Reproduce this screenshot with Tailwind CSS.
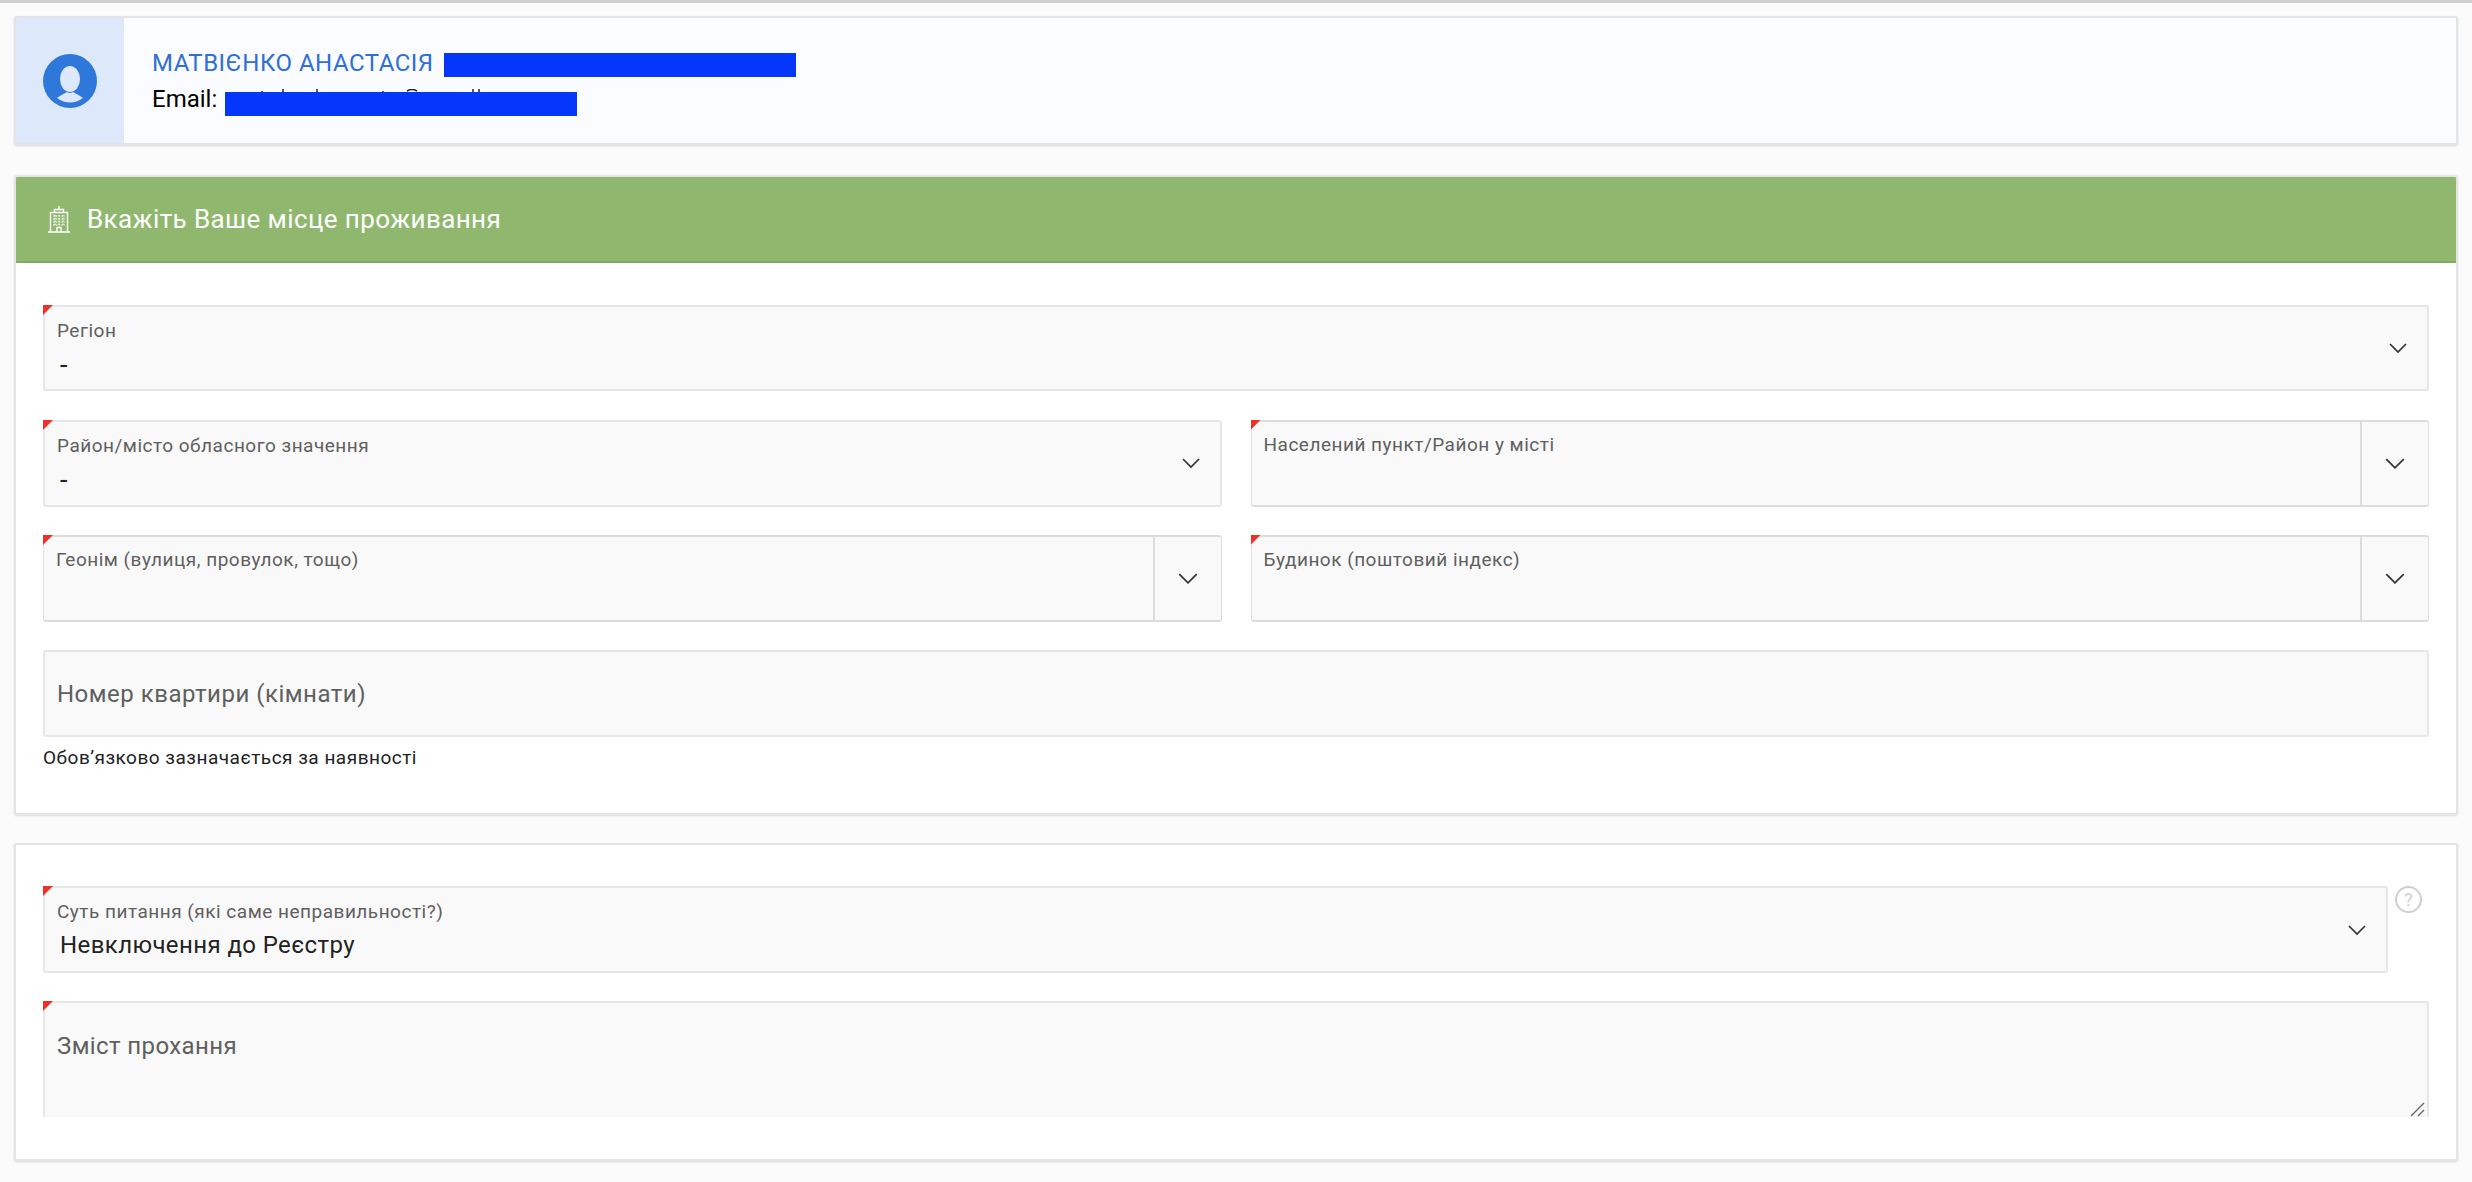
<!DOCTYPE html>
<html lang="uk">
<head>
  <meta charset="UTF-8">
  <title>Вкажіть Ваше місце проживання</title>
  <script src="https://cdn.jsdelivr.net/npm/@tailwindcss/browser@4"></script>
</head>
<body class="h-[1182px] overflow-hidden bg-[#fbfbfb] [font-family:Roboto,sans-serif]">
  <div class="h-[3px] bg-[#cfcfcf]"></div>

  <div class="px-[14px] pt-[13px]">
    <!-- user card -->
    <div class="flex h-[129px] overflow-hidden rounded-[3px] border-2 border-[#e2e4ea] bg-[#fbfcff] shadow-sm">
      <div class="flex w-[108px] items-center justify-center bg-[#dde8fa]">
        <svg width="54" height="54" viewBox="0 0 54 54">
          <circle cx="27" cy="27" r="27" fill="#2f78db"/>
          <ellipse cx="27" cy="25" rx="10" ry="13" fill="#dde8fa"/>
          <path d="M14 44 Q20 40 24 38 Q27 40 30 38 Q34 40 40 44 Q27 53 14 44Z" fill="#dde8fa"/>
        </svg>
      </div>
      <div class="pl-[28px] pt-[32px]">
        <div class="flex h-[36px] items-start text-[24px] leading-[26px] tracking-[0.5px] text-[#2f6fd6]">
          <span>МАТВІЄНКО АНАСТАСІЯ</span>
          <span class="ml-[10px] mt-[3px] h-[24px] w-[352px] bg-[#0437f9]"></span>
        </div>
        <div class="flex items-start text-[24px] leading-[26px] text-black">
          <span>Email:</span>
          <span class="relative ml-[8px] mt-[6px] h-[24px] w-[352px] bg-[#0437f9]">
            <!-- tops of the letters that stick out above the blue bar -->
            <svg class="absolute -top-[3px] left-0" width="352" height="3" viewBox="0 0 352 3" fill="none" stroke="#222" stroke-width="1.5">
              <path d="M37 2V3M58 0V3M92 0V3M158 2V3M182 2Q187 -1 192 2M248 0V3M254 0V3"/>
            </svg>
          </span>
        </div>
      </div>
    </div>

    <!-- address card -->
    <div class="mt-[30px] h-[640px] overflow-hidden rounded-[3px] border-2 border-[#e4e4e4] bg-white shadow-sm">
      <div class="flex h-[86px] items-center gap-[16px] border-b-2 border-[#84ab63] bg-[#8fb86e] pl-[31px] text-white">
        <svg width="24" height="27" viewBox="0 0 24 27" fill="none" stroke="#fff" stroke-width="1.4">
          <path d="M1 26H23M3.5 26V6.5H20.5V26M7.5 6.5V3.5H16.5V6.5M12 3.5V0"/>
          <path d="M10 26V21.5H14V26"/>
          <path d="M6 10H18M6 13H18M6 16H18M6 19H18M8 9V20M12 9V20M16 9V20" stroke-width="1.2" stroke-dasharray="1.6 1.2"/>
        </svg>
        <span class="text-[26px] tracking-[0.4px]">Вкажіть Ваше місце проживання</span>
      </div>

      <div class="grid grid-cols-2 gap-x-[29px] gap-y-[28px] pl-[27px] pr-[27px] pt-[42px]">
        <!-- region -->
        <div class="relative col-span-2 mb-[1px] h-[86px] rounded-[3px] border-2 border-[#e6e6e6] bg-[#f9f9f9] pl-[12px] pt-[13px]">
          <div class="absolute -left-[2px] -top-[2px] h-[10px] w-[10px] bg-[#ee3124] [clip-path:polygon(0_0,100%_0,0_100%)]"></div>
          <div class="text-[19px] leading-[22px] tracking-[0.5px] text-[#5f5f5f]">Регіон</div>
          <div class="mt-[9px] pl-[3px] text-[27px] leading-[28px] text-[#222]">-</div>
          <svg class="absolute right-[20px] top-[36px]" width="18" height="11" viewBox="0 0 18 11" fill="none" stroke="#333" stroke-width="1.7"><path d="M1 1L9 9L17 1"/></svg>
        </div>

        <!-- district -->
        <div class="relative h-[87px] rounded-[3px] border-2 border-[#e6e6e6] bg-[#f9f9f9] pl-[12px] pt-[13px]">
          <div class="absolute -left-[2px] -top-[2px] h-[10px] w-[10px] bg-[#ee3124] [clip-path:polygon(0_0,100%_0,0_100%)]"></div>
          <div class="text-[19px] leading-[22px] tracking-[0.5px] text-[#5f5f5f]">Район/місто обласного значення</div>
          <div class="mt-[9px] pl-[3px] text-[27px] leading-[28px] text-[#222]">-</div>
          <svg class="absolute right-[20px] top-[36px]" width="18" height="11" viewBox="0 0 18 11" fill="none" stroke="#333" stroke-width="1.7"><path d="M1 1L9 9L17 1"/></svg>
        </div>

        <!-- settlement -->
        <div class="relative flex h-[87px] rounded-[3px] border-x border-y-2 border-x-[#e0e0e0] border-y-[#dcdcdc] bg-[#f9f9f9]">
          <div class="absolute -left-[1px] -top-[2px] h-[10px] w-[10px] bg-[#ee3124] [clip-path:polygon(0_0,100%_0,0_100%)]"></div>
          <div class="flex-1 pl-[12px] pt-[12px] text-[19px] leading-[22px] tracking-[0.5px] text-[#5f5f5f]">Населений пункт/Район у місті</div>
          <div class="flex w-[68px] items-center justify-center border-l-2 border-[#dcdcdc]">
            <svg width="20" height="12" viewBox="0 0 18 11" fill="none" stroke="#333" stroke-width="1.6"><path d="M1 1L9 9L17 1"/></svg>
          </div>
        </div>

        <!-- street -->
        <div class="relative flex h-[87px] rounded-[3px] border-x border-y-2 border-x-[#e0e0e0] border-y-[#dcdcdc] bg-[#f9f9f9]">
          <div class="absolute -left-[1px] -top-[2px] h-[10px] w-[10px] bg-[#ee3124] [clip-path:polygon(0_0,100%_0,0_100%)]"></div>
          <div class="flex-1 pl-[12px] pt-[12px] text-[19px] leading-[22px] tracking-[0.5px] text-[#5f5f5f]">Геонім (вулиця, провулок, тощо)</div>
          <div class="flex w-[68px] items-center justify-center border-l-2 border-[#dcdcdc]">
            <svg width="20" height="12" viewBox="0 0 18 11" fill="none" stroke="#333" stroke-width="1.6"><path d="M1 1L9 9L17 1"/></svg>
          </div>
        </div>

        <!-- house -->
        <div class="relative flex h-[87px] rounded-[3px] border-x border-y-2 border-x-[#e0e0e0] border-y-[#dcdcdc] bg-[#f9f9f9]">
          <div class="absolute -left-[1px] -top-[2px] h-[10px] w-[10px] bg-[#ee3124] [clip-path:polygon(0_0,100%_0,0_100%)]"></div>
          <div class="flex-1 pl-[12px] pt-[12px] text-[19px] leading-[22px] tracking-[0.5px] text-[#5f5f5f]">Будинок (поштовий індекс)</div>
          <div class="flex w-[68px] items-center justify-center border-l-2 border-[#dcdcdc]">
            <svg width="20" height="12" viewBox="0 0 18 11" fill="none" stroke="#333" stroke-width="1.6"><path d="M1 1L9 9L17 1"/></svg>
          </div>
        </div>

        <!-- flat -->
        <div class="col-span-2">
          <div class="flex h-[87px] items-center rounded-[3px] border-2 border-[#e6e6e6] bg-[#f9f9f9] pl-[12px] text-[24px] tracking-[0.5px] text-[#5f5f5f]">Номер квартири (кімнати)</div>
          <div class="mt-[9px] text-[19px] leading-[24px] tracking-[0.5px] text-[#222]">Обов’язково зазначається за наявності</div>
        </div>
      </div>
    </div>

    <!-- request card -->
    <div class="mt-[28px] h-[318px] overflow-hidden rounded-[3px] border-2 border-[#e4e4e4] bg-white pl-[27px] pr-[27px] pt-[41px] shadow-sm">
      <div class="flex items-start gap-[7px] pr-[7px]">
        <div class="relative h-[87px] flex-1 rounded-[3px] border-2 border-[#e6e6e6] bg-[#f9f9f9] pl-[12px] pt-[13px]">
          <div class="absolute -left-[2px] -top-[2px] h-[10px] w-[10px] bg-[#ee3124] [clip-path:polygon(0_0,100%_0,0_100%)]"></div>
          <div class="text-[19px] leading-[22px] tracking-[0.5px] text-[#5f5f5f]">Суть питання (які саме неправильності?)</div>
          <div class="mt-[8px] pl-[3px] text-[24px] leading-[28px] tracking-[0.4px] text-[#222]">Невключення до Реєстру</div>
          <svg class="absolute right-[20px] top-[37px]" width="18" height="11" viewBox="0 0 18 11" fill="none" stroke="#333" stroke-width="1.7"><path d="M1 1L9 9L17 1"/></svg>
        </div>
        <div class="flex h-[27px] w-[27px] items-center justify-center rounded-full border-2 border-[#cfcfcf] text-[18px] leading-none text-[#cfcfcf]">?</div>
      </div>
      <div class="relative mt-[28px] h-[116px] rounded-t-[3px] border-x-2 border-t-2 border-[#e6e6e6] bg-[#f9f9f9] pl-[12px] pt-[29px] text-[24px] leading-[28px] tracking-[0.4px] text-[#5f5f5f]">
        <div class="absolute -left-[2px] -top-[2px] h-[10px] w-[10px] bg-[#ee3124] [clip-path:polygon(0_0,100%_0,0_100%)]"></div>
        Зміст прохання
        <svg class="absolute bottom-0 right-[2px]" width="15" height="15" viewBox="0 0 15 15" fill="none" stroke="#666" stroke-width="1.4"><path d="M1 14L14 1M8 14L14 8"/></svg>
      </div>
    </div>
  </div>
</body>
</html>
